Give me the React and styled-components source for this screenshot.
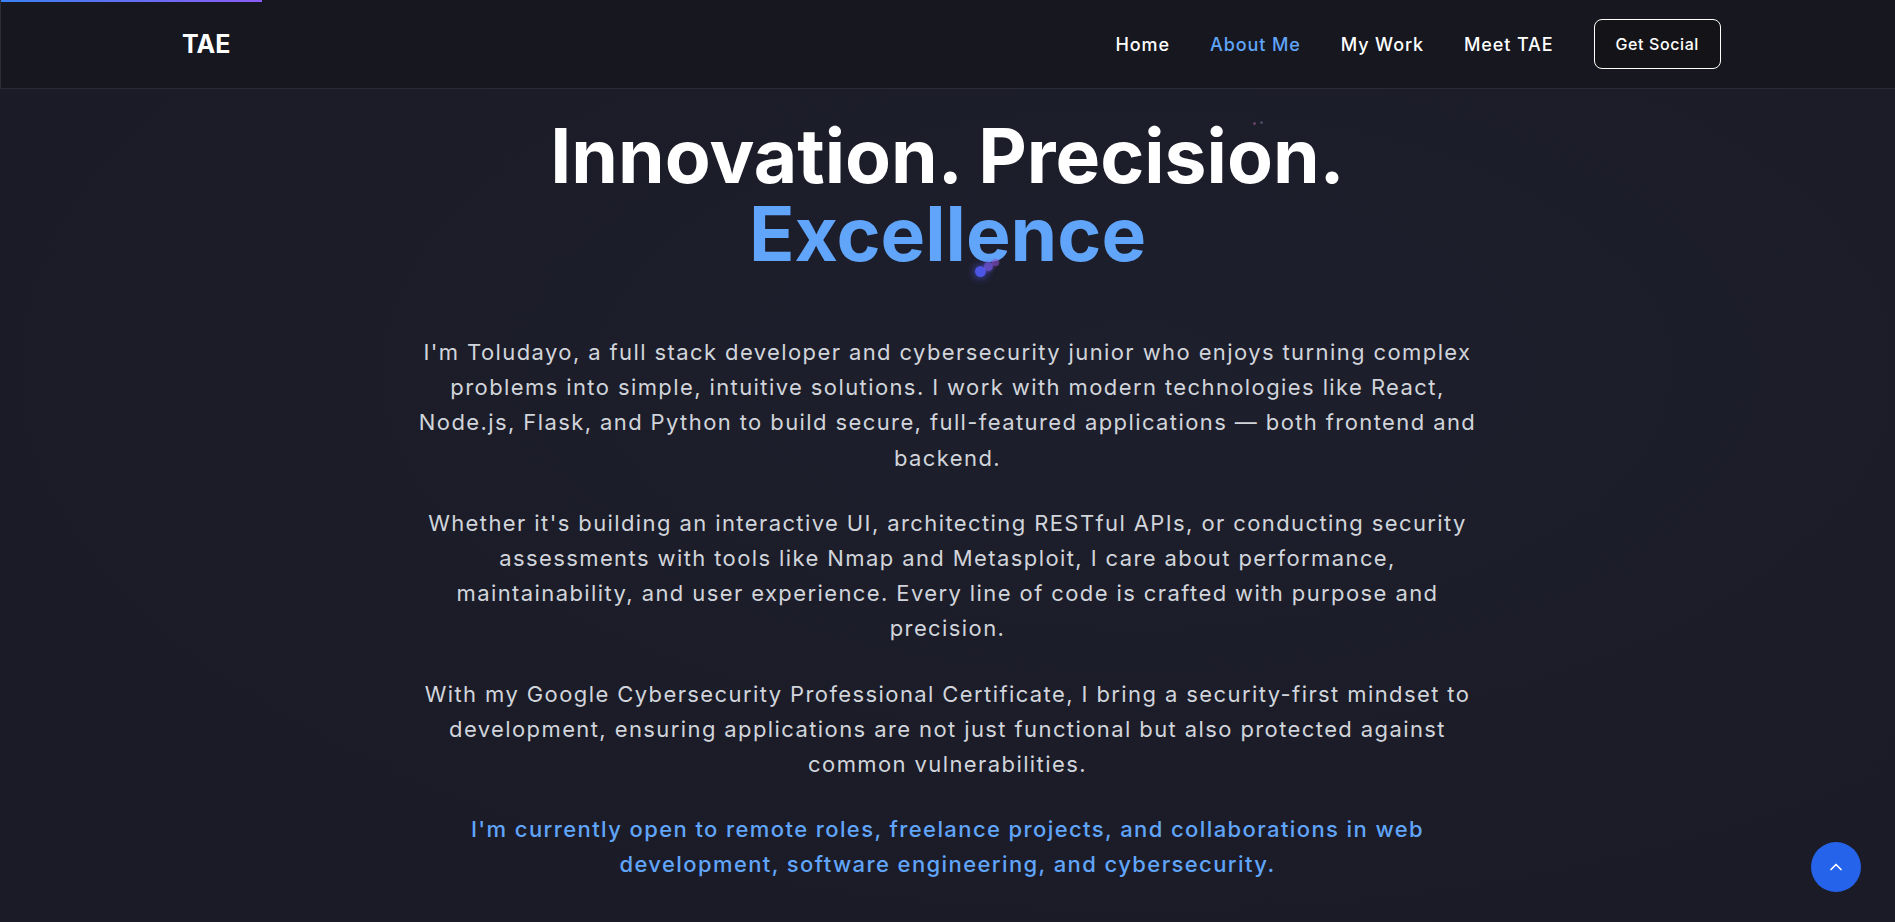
import React from "react";
import styled, { createGlobalStyle } from "styled-components";
import { ChevronUp } from "lucide-react";

const GlobalStyle = createGlobalStyle`
  html, body {
    margin: 0;
    padding: 0;
    background: #1b1c28;
    font-family: Inter, "Noto Sans", sans-serif;
    color: #ffffff;
    overflow: hidden;
  }
  * {
    box-sizing: border-box;
  }
`;

const Page = styled.div`
  position: relative;
  min-height: 922px;
  background: radial-gradient(ellipse at 60% 40%, #1e1f2c 0%, #1b1c28 55%, #1a1b26 100%);
`;

const Header = styled.header`
  position: relative;
  height: 89px;
  background: #16171f;
  border-left: 1px solid #2c2d38;
  border-bottom: 1px solid #2a2b36;
`;

const ProgressBar = styled.div`
  position: absolute;
  top: 0;
  left: 0;
  height: 2px;
  background: linear-gradient(90deg, #3b82f6, #8b5cf6);
`;

const NavInner = styled.div`
  height: 100%;
  padding: 0 174px 0 181px;
  display: flex;
  align-items: center;
  justify-content: space-between;
`;

const Logo = styled.a`
  font-size: 25px;
  font-weight: 700;
  color: #ffffff;
  text-decoration: none;
`;

const NavLinks = styled.nav`
  display: flex;
  align-items: center;
  gap: 40px;
`;

const NavLink = styled.a`
  font-size: 18px;
  font-weight: 500;
  letter-spacing: 0.9px;
  color: ${(p) => (p.$active ? "#60a5fa" : "#ffffff")};
  text-decoration: none;
`;

const SocialButton = styled.button`
  font-family: inherit;
  font-size: 16px;
  font-weight: 500;
  letter-spacing: 0.6px;
  line-height: 24px;
  color: #ffffff;
  background: #141418;
  border: 1px solid #ffffff;
  border-radius: 8px;
  padding: 12px 21px;
  cursor: pointer;
`;

const Hero = styled.main`
  display: flex;
  flex-direction: column;
  align-items: center;
  text-align: center;
  padding-top: 28px;
`;

const Title = styled.h1`
  margin: 0;
  font-size: 75px;
  font-weight: 700;
  line-height: 78px;
  color: #ffffff;
`;

const Accent = styled.span`
  display: block;
  color: #60a5fa;
`;

const Body = styled.div`
  max-width: 1066px;
  margin-top: 62px;
  display: flex;
  flex-direction: column;
  gap: 30px;
`;

const Para = styled.p`
  margin: 0;
  font-size: 22px;
  line-height: 35.2px;
  letter-spacing: 1.4px;
  font-weight: ${(p) => (p.$highlight ? 500 : 400)};
  color: ${(p) => (p.$highlight ? "#60a5fa" : "#d1d5db")};
`;

const Dot = styled.span`
  position: absolute;
  border-radius: 50%;
  pointer-events: none;
`;

const ScrollTop = styled.button`
  position: fixed;
  right: 34px;
  bottom: 30px;
  width: 50px;
  height: 50px;
  border: none;
  border-radius: 50%;
  background: #2563eb;
  color: #ffffff;
  display: flex;
  align-items: center;
  justify-content: center;
  cursor: pointer;
`;

const trail = [
  { x: 980, y: 271, s: 11, c: "rgba(79, 90, 240, 0.95)", b: 4 },
  { x: 988, y: 266, s: 9, c: "rgba(110, 85, 220, 0.8)", b: 2 },
  { x: 995, y: 262, s: 7, c: "rgba(140, 80, 210, 0.6)", b: 1 },
  { x: 1254, y: 123, s: 3, c: "rgba(150, 90, 140, 0.6)", b: 0 },
  { x: 1261, y: 122, s: 3, c: "rgba(120, 110, 160, 0.5)", b: 0 },
];

export default function App() {
  return (
    <Page>
      <GlobalStyle />
      <Header>
        <ProgressBar style={{ width: 261 }} />
        <NavInner>
          <Logo href="#">TAE</Logo>
          <NavLinks>
            <NavLink href="#">Home</NavLink>
            <NavLink href="#" $active>
              About Me
            </NavLink>
            <NavLink href="#">My Work</NavLink>
            <NavLink href="#">Meet TAE</NavLink>
            <SocialButton>Get Social</SocialButton>
          </NavLinks>
        </NavInner>
      </Header>

      <Hero>
        <Title>
          Innovation. Precision.
          <Accent>Excellence</Accent>
        </Title>
        <Body>
          <Para>
            I'm Toludayo, a full stack developer and cybersecurity junior who
            enjoys turning complex problems into simple, intuitive solutions. I
            work with modern technologies like React, Node.js, Flask, and Python
            to build secure, full-featured applications — both frontend and
            backend.
          </Para>
          <Para>
            Whether it's building an interactive UI, architecting RESTful APIs,
            or conducting security assessments with tools like Nmap and
            Metasploit, I care about performance, maintainability, and user
            experience. Every line of code is crafted with purpose and
            precision.
          </Para>
          <Para>
            With my Google Cybersecurity Professional Certificate, I bring a
            security-first mindset to development, ensuring applications are not
            just functional but also protected against common vulnerabilities.
          </Para>
          <Para $highlight>
            I'm currently open to remote roles, freelance projects, and
            collaborations in web development, software engineering, and
            cybersecurity.
          </Para>
        </Body>
      </Hero>

      {trail.map((d, i) => (
        <Dot
          key={i}
          style={{
            left: d.x - d.s / 2,
            top: d.y - d.s / 2,
            width: d.s,
            height: d.s,
            background: d.c,
            boxShadow: d.b ? `0 0 ${d.b * 2}px ${d.c}` : "none",
          }}
        />
      ))}

      <ScrollTop aria-label="Scroll to top">
        <ChevronUp size={20} strokeWidth={2} />
      </ScrollTop>
    </Page>
  );
}
